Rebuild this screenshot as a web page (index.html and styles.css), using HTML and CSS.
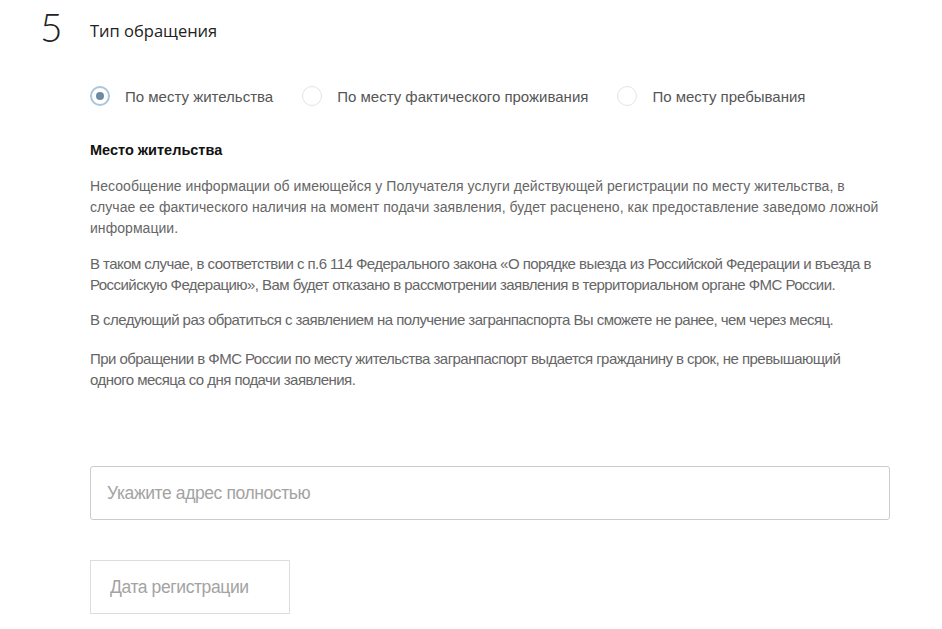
FILE: index.html
```html
<!DOCTYPE html>
<html lang="ru">
<head>
  <meta charset="UTF-8" />
  <title>Тип обращения</title>
  <link rel="stylesheet" href="styles.css">
</head>
<body>

  <section class="step">
    <div class="step-head">
      <span class="step-num">5</span>
      <h2>Тип обращения</h2>
    </div>

    <div class="step-body">
      <div class="radios">
        <label class="radio checked"><span class="dot"></span>По месту жительства</label>
        <label class="radio"><span class="dot"></span>По месту фактического проживания</label>
        <label class="radio"><span class="dot"></span>По месту пребывания</label>
      </div>

      <h3>Место жительства</h3>
      <p class="note first">Несообщение информации об имеющейся у Получателя услуги действующей регистрации по месту жительства, в случае ее фактического наличия на момент подачи заявления, будет расценено, как предоставление заведомо ложной информации.</p>
      <p class="note narrow">В таком случае, в соответствии с п.6 114 Федерального закона «О порядке выезда из Российской Федерации и въезда в Российскую Федерацию», Вам будет отказано в рассмотрении заявления в территориальном органе ФМС России.</p>
      <p class="note narrow">В следующий раз обратиться с заявлением на получение загранпаспорта Вы сможете не ранее, чем через месяц.</p>
      <p class="note narrow spaced">При обращении в ФМС России по месту жительства загранпаспорт выдается гражданину в срок, не превышающий одного месяца со дня подачи заявления.</p>

      <input class="field address" type="text" placeholder="Укажите адрес полностью">
      <input class="field date" type="text" placeholder="Дата регистрации">
    </div>
  </section>

</body>
</html>
```

FILE: styles.css
```css
body {
  margin: 0;
  padding: 0;
  background: #fff;
  font-family: 'Liberation Sans', Arial, sans-serif;
  color: #222;
}

.step {
  padding: 4px 0 0 40px;
}

.step-head {
  display: flex;
  align-items: center;
  height: 46px;
}

.step-num {
  font-family: Lato, 'Open Sans', sans-serif;
  font-weight: 300;
  font-size: 39px;
  line-height: 46px;
  width: 50px;
  color: #222;
}

h2 {
  font-family: 'Open Sans', sans-serif;
  font-weight: 400;
  font-size: 16.5px;
  margin: 0;
  padding-top: 6px;
  color: #222;
}

.step-body {
  width: 800px;
  margin-left: 50px;
}

.radios {
  display: flex;
  align-items: center;
  margin-top: 34px;
  height: 24px;
}

.radio {
  display: flex;
  align-items: center;
  font-size: 15px;
  color: #555;
  margin-right: 29px;
}

.dot {
  width: 18px;
  height: 18px;
  border: 1px solid #e4e4e4;
  border-radius: 50%;
  margin-right: 15px;
  position: relative;
}

.radio.checked .dot {
  border: 2px solid #a9c6dc;
  width: 16px;
  height: 16px;
}

.radio.checked .dot::after {
  content: "";
  position: absolute;
  left: 4px;
  top: 4px;
  width: 8px;
  height: 8px;
  border-radius: 50%;
  background: #6b8aa3;
}

h3 {
  font-size: 14.5px;
  font-weight: bold;
  color: #111;
  margin: 33px 0 0;
  line-height: 18px;
}

.note {
  font-size: 14px;
  line-height: 21px;
  color: #666;
  margin: 14px 0 0;
}

.note.first {
  margin-top: 17px;
  padding-right: 10px;
  letter-spacing: 0.05px;
}

.narrow {
  font-size: 15px;
  letter-spacing: -0.55px;
}

.note.spaced {
  margin-top: 18px;
  padding-right: 30px;
}

.field {
  display: block;
  box-sizing: border-box;
  font-family: 'Liberation Sans', Arial, sans-serif;
  font-size: 17.5px;
  letter-spacing: -0.4px;
  color: #333;
  background: #fff;
  outline: none;
}

.field::placeholder {
  color: #a3a3a3;
}

.address {
  width: 800px;
  height: 54px;
  margin-top: 76px;
  border: 1px solid #ccc;
  border-radius: 3px;
  padding: 0 16px;
}

.date {
  width: 200px;
  height: 54px;
  margin-top: 40px;
  border: 1px solid #ddd;
  border-radius: 0;
  padding: 0 19px;
}
```
